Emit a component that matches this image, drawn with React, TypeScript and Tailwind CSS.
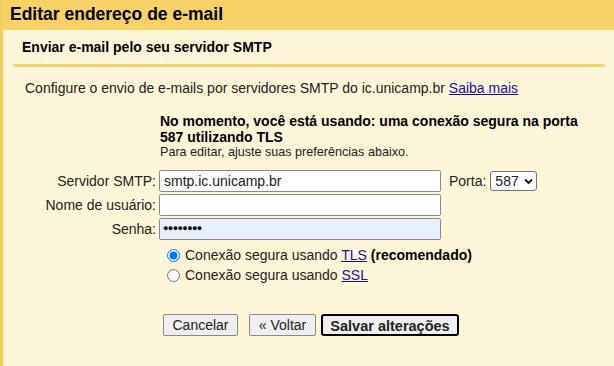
export default function App() {
  return (
    <div className="w-[614px] h-[366px] overflow-hidden bg-[#fef6d9] text-[#222] font-['Liberation_Sans',Arial,sans-serif] border-l-[3px] border-[#f3cf62]">
      <div className="h-[30px] bg-[#f8d267] pl-[7px] flex items-center">
        <h1 className="text-[17.5px] font-bold text-black leading-none">Editar endereço de e-mail</h1>
      </div>

      <div className="pl-[19px] pt-[9px] pb-[9px]">
        <h2 className="text-[14px] font-bold text-black leading-[16px]">Enviar e-mail pelo seu servidor SMTP</h2>
      </div>
      <div className="ml-[10px] mr-[9px] h-[3px] rounded-full bg-[#f0d46f]" />

      <p className="pl-[22px] pt-[13px] text-[14px] leading-[17px]">
        Configure o envio de e-mails por servidores SMTP do ic.unicamp.br{" "}
        <a className="text-[#1a0dab] underline" href="#">Saiba mais</a>
      </p>

      <div className="pl-[157px] pt-[16px]">
        <p className="text-[14px] font-bold leading-[16px] text-black">
          No momento, você está usando: uma conexão segura na porta
          <br />
          587 utilizando TLS
        </p>
        <p className="text-[12.6px] leading-[14px] text-[#222]">Para editar, ajuste suas preferências abaixo.</p>
      </div>

      <div className="pt-[11px] flex flex-col gap-[2px]">
        <div className="flex items-center">
          <label className="w-[154px] text-right text-[14px] pr-[1px]">Servidor SMTP:</label>
          <input
            readOnly
            value="smtp.ic.unicamp.br"
            className="ml-[2px] w-[282px] h-[22px] px-[4px] text-[14px] bg-white border border-[#8a8a8a] rounded-[2px]"
          />
          <span className="ml-[8px] text-[14px]">Porta:</span>
          <div className="ml-[4px] h-[20px] w-[47px] flex items-center justify-between pl-[4px] pr-[3px] bg-white border border-[#767676] rounded-[3px] text-[14px]">
            <span>587</span>
            <svg width="9" height="7" viewBox="0 0 9 7">
              <path d="M1 1.5 L4.5 5 L8 1.5" fill="none" stroke="#111" strokeWidth="1.8" />
            </svg>
          </div>
        </div>
        <div className="flex items-center">
          <label className="w-[154px] text-right text-[14px] pr-[1px]">Nome de usuário:</label>
          <input
            readOnly
            value=""
            className="ml-[2px] w-[282px] h-[22px] px-[4px] text-[14px] bg-white border border-[#8a8a8a] rounded-[2px]"
          />
        </div>
        <div className="flex items-center">
          <label className="w-[154px] text-right text-[14px] pr-[1px]">Senha:</label>
          <div className="ml-[2px] w-[282px] h-[22px] pl-[3px] flex items-center bg-[#e8f0fe] border border-[#8a8a8a] rounded-[2px] text-[9px] tracking-[-0.6px] text-black">
            ●●●●●●●●
          </div>
        </div>
      </div>

      <div className="pl-[164px] pt-[7px] flex flex-col gap-[4px] text-[14px]">
        <label className="flex items-center gap-[5px] leading-[16px]">
          <input type="radio" name="sec" defaultChecked className="m-0 w-[13px] h-[13px]" />
          <span>
            Conexão segura usando <a href="#" className="text-[#1a0dab] underline">TLS</a>{" "}
            <b className="text-black">(recomendado)</b>
          </span>
        </label>
        <label className="flex items-center gap-[5px] leading-[16px]">
          <input type="radio" name="sec" className="m-0 w-[13px] h-[13px]" />
          <span>
            Conexão segura usando <a href="#" className="text-[#1a0dab] underline">SSL</a>
          </span>
        </label>
      </div>

      <div className="pl-[160px] pt-[31px] flex items-center text-[14px]">
        <button className="w-[75px] h-[22px] bg-[#efefef] border border-[#8a8a8a] rounded-[2px]">Cancelar</button>
        <button className="ml-[11px] w-[67px] h-[22px] bg-[#efefef] border border-[#8a8a8a] rounded-[2px]">« Voltar</button>
        <button className="ml-[5px] w-[138px] h-[22px] bg-[#efefef] border-2 border-black rounded-[3px] font-bold text-[14.5px]">Salvar alterações</button>
      </div>
    </div>
  );
}
